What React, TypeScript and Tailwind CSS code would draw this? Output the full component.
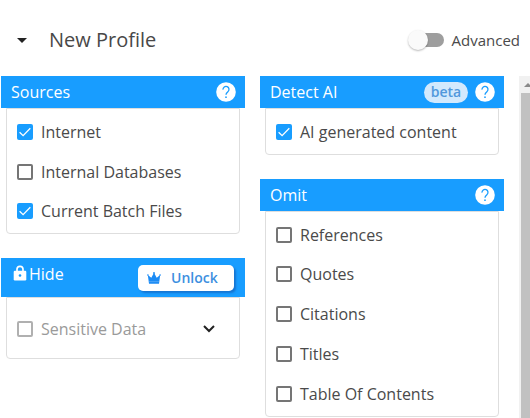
import type { ReactNode } from 'react';

function HelpIcon() {
  return (
    <svg viewBox="0 0 24 24" className="h-6 w-6 shrink-0" aria-label="Help">
      <circle cx="12" cy="12" r="9.8" fill="#fff" />
      <path d="M9 9.6a3 3 0 1 1 4.9 2.1c-1.1.9-1.9 1.4-1.9 3" fill="none" stroke="#189dff" strokeWidth="1.3" />
      <circle cx="12" cy="17.2" r="0.85" fill="#189dff" />
    </svg>
  );
}

function LockIcon() {
  return (
    <svg viewBox="0 0 14 16" className="mb-0.5 h-4 w-3.5">
      <path d="M4 7V4.3a3 3 0 0 1 6 0V7" fill="none" stroke="#fff" strokeWidth="1.7" />
      <rect x="0.7" y="5.7" width="12.6" height="9.8" rx="1.2" fill="#fff" />
      <circle cx="7" cy="10.5" r="1.3" fill="#189dff" />
    </svg>
  );
}

function CrownIcon() {
  return (
    <svg viewBox="0 0 14 12" className="h-3 w-3.5" fill="#1b8bf5">
      <path d="M0.8 3 4.3 5.8 7 0.8l2.7 5L13.2 3 12 11.8H2Z" />
      <path d="M2 9.6h10" stroke="#7cbcf9" strokeWidth="0.5" />
      <circle cx="0.9" cy="3" r="0.8" />
      <circle cx="7" cy="1" r="0.9" />
      <circle cx="13.1" cy="3" r="0.8" />
    </svg>
  );
}

function Check({ label, checked, disabled }: { label: string; checked?: boolean; disabled?: boolean }) {
  const frame = checked ? 'bg-[#189dff]' : disabled ? 'border-2 border-[#b0b0b0]' : 'border-2 border-[#757575]';
  return (
    <div className={'flex h-4 items-center gap-2 ' + (disabled ? 'text-[#9a9a9a]' : 'text-[#4a4a4a]')}>
      <span className={'block h-4 w-4 shrink-0 rounded-xs ' + frame}>
        {checked && (
          <svg viewBox="0 0 16 16" className="h-4 w-4">
            <path d="m2.6 8.3 3.5 3.4 7.2-7.4" fill="none" stroke="#fff" strokeWidth="1.3" />
          </svg>
        )}
      </span>
      <span className="text-base leading-4 whitespace-nowrap">{label}</span>
    </div>
  );
}

function Bar({ title, children }: { title: string; children?: ReactNode }) {
  return (
    <div className="flex h-8 items-center bg-[#189dff] pr-[7px] pl-2.5 text-base text-white">
      <span>{title}</span>
      <div className="ml-auto flex items-center gap-[5px]">
        {children}
        <HelpIcon />
      </div>
    </div>
  );
}

const panel = 'mx-[5px] w-[234px] rounded-b border border-[#dedede] pl-2.5 ';

export default function App() {
  return (
    <div className="h-[418px] w-[530px] overflow-hidden bg-white font-['Open_Sans',sans-serif]">
      <header className="flex h-[76px] items-center pt-1 pl-[17px]">
        <svg viewBox="0 0 10 5" className="h-[5px] w-2.5" fill="#222"><path d="M0 0h10L5 5Z" /></svg>
        <h1 className="ml-[22px] text-xl leading-6 text-[#484848]">New Profile</h1>
        <div className="ml-auto flex items-center pr-[10px]">
          <div className="flex h-5 w-9 items-center">
            <span className="z-10 h-5 w-5 rounded-full bg-[#fafafa] shadow-[0_1px_2px_rgba(0,0,0,0.28)]" />
            <span className="-ml-4 h-3.5 w-8 rounded-full bg-[#9e9e9e]" />
          </div>
          <span className="ml-2 text-[15px] leading-5 text-[#4a4a4a]">Advanced</span>
        </div>
      </header>

      <div className="flex h-[342px]">
        <div className="ml-px w-[244px]">
          <section>
            <Bar title="Sources" />
            <div className={panel + 'flex h-[126px] flex-col gap-[23.5px] pt-[15px]'}>
              <Check label="Internet" checked />
              <Check label="Internal Databases" />
              <Check label="Current Batch Files" checked />
            </div>
          </section>
          <section className="mt-6">
            <div className="flex h-[39px] bg-[#189dff] pl-3 text-white">
              <div className="flex h-8 items-center gap-0.5 text-base">
                <LockIcon />
                <span>Hide</span>
              </div>
              <button className="mt-[7px] mr-[11px] ml-auto flex h-[26px] w-[96px] items-center rounded-[5px] bg-white pl-[9px] text-sm font-semibold text-[#3d8fdf] shadow-[2px_2px_2px_rgba(20,90,180,0.6)]">
                <CrownIcon />
                <span className="ml-[10px]">Unlock</span>
              </button>
            </div>
            <div className={panel + 'flex h-[62px] items-center justify-between pt-0.5 pr-6'}>
              <Check label="Sensitive Data" disabled />
              <svg viewBox="0 0 12 8" className="h-2 w-3"><path d="m1 1 5 5 5-5" fill="none" stroke="#222" strokeWidth="2" /></svg>
            </div>
          </section>
        </div>

        <div className="ml-[15px] w-[244px]">
          <section>
            <Bar title="Detect AI">
              <span className="flex h-[21px] w-11 items-center justify-center rounded-full bg-[#d2e9fd] text-sm font-semibold text-[#5098dc]">beta</span>
            </Bar>
            <div className={panel + 'flex h-[47px] items-center'}>
              <Check label="AI generated content" checked />
            </div>
          </section>
          <section className="mt-6">
            <Bar title="Omit" />
            <div className={panel + 'grid h-[206px] grid-rows-[39px_40px_40px_40px_40px] pt-[3px]'}>
              <div className="flex items-center"><Check label="References" /></div>
              <div className="flex items-center"><Check label="Quotes" /></div>
              <div className="flex items-center"><Check label="Citations" /></div>
              <div className="flex items-center"><Check label="Titles" /></div>
              <div className="flex items-center"><Check label="Table Of Contents" /></div>
            </div>
          </section>
        </div>

        <div className="ml-[15px] flex w-[11px] flex-col bg-[#f1f1f1]">
          <div className="flex h-[17px] items-center pl-[5px]">
            <svg viewBox="0 0 8 4" className="h-1 w-2 shrink-0" fill="#8a8a8a"><path d="M0 4h8L4 0Z" /></svg>
          </div>
          <div className="ml-0.5 flex-1 bg-[#c1c1c1]" />
        </div>
      </div>
    </div>
  );
}
